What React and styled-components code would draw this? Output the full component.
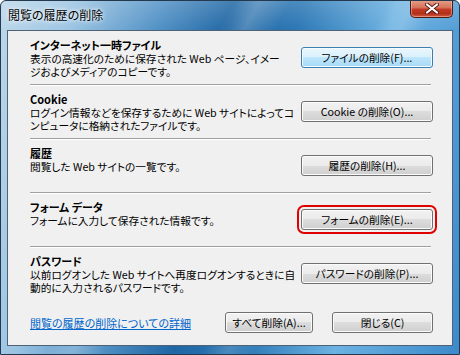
import React from "react";
import styled, { createGlobalStyle } from "styled-components";

const GlobalStyle = createGlobalStyle`
  html, body {
    margin: 0;
    padding: 0;
    background: #ffffff;
  }
  body {
    font-family: "Noto Sans CJK JP", "Liberation Sans", sans-serif;
    font-size: 11px;
    color: #000;
  }
`;

const Window = styled.div`
  width: 460px;
  height: 355px;
  box-sizing: border-box;
  display: flex;
  flex-direction: column;
  border: 1px solid #24384e;
  border-radius: 6px 6px 0 0;
  overflow: hidden;
  background:
    linear-gradient(118deg, transparent 36%, rgba(255, 255, 255, 0.2) 40%, transparent 45%),
    linear-gradient(118deg, transparent 60%, rgba(255, 255, 255, 0.16) 64%, transparent 68%),
    linear-gradient(180deg, rgba(255, 255, 255, 0.16) 0%, rgba(255, 255, 255, 0) 30px),
    linear-gradient(100deg, #bcd7ea 0%, #9cc5e3 14%, #5594c7 30%, #1f66a4 45%, #2b77b5 58%, #6cb2e2 76%, #3c8acb 100%);
`;

const TitleBar = styled.div`
  height: 29px;
  display: flex;
  justify-content: space-between;
  align-items: flex-start;
  padding-left: 7px;
`;

const Title = styled.div`
  margin-top: 6px;
  font-size: 12px;
  line-height: 16px;
  color: #000;
  text-shadow: 0 0 6px rgba(255, 255, 255, 0.9), 0 0 3px rgba(255, 255, 255, 0.9);
  font-feature-settings: "palt";
`;

const CloseButton = styled.div`
  width: 43px;
  height: 18px;
  margin-right: 6px;
  margin-top: -1px;
  box-sizing: border-box;
  display: flex;
  align-items: center;
  justify-content: center;
  border: 1px solid #4a1c14;
  border-top: none;
  border-radius: 0 0 5px 5px;
  background: linear-gradient(180deg, #e6a18b 0%, #d6735a 45%, #c23a25 55%, #b52f1b 80%, #d45c44 100%);
  box-shadow: inset 0 0 0 1px rgba(255, 210, 190, 0.45);
`;

const Client = styled.div`
  flex: 1;
  margin: 0 6px 8px 6px;
  border: 1px solid #4f6276;
  background: #f0f0f0;
  padding: 0 19px 0 22px;
  display: flex;
  flex-direction: column;
`;

const Section = styled.div`
  height: 53px;
  display: grid;
  grid-template-columns: 1fr auto;
  align-items: center;
  border-bottom: ${(p) => (p.$last ? "none" : "1px solid #a0a0a0")};
  box-shadow: ${(p) => (p.$last ? "none" : "0 1px 0 #ffffff")};
  margin-right: ${(p) => (p.$last ? "0" : "2px")};
`;

const TextBlock = styled.div`
  align-self: start;
  padding-top: 7px;
  white-space: nowrap;
  font-feature-settings: "palt";
`;

const Heading = styled.div`
  font-weight: 700;
  font-size: 11px;
  line-height: 14px;
`;

const Desc = styled.div`
  font-size: 10.7px;
  line-height: 13px;
  white-space: pre;
`;

const Button = styled.button`
  width: ${(p) => p.$w || 132}px;
  height: 21px;
  padding: 0;
  margin-right: ${(p) => (p.$shift ? "-2px" : "0")};
  font-family: "Noto Sans CJK JP", "Liberation Sans", sans-serif;
  font-size: 10.7px;
  line-height: 19px;
  color: #000;
  font-feature-settings: "palt";
  border-radius: 3px;
  border: 1px solid ${(p) => (p.$active ? "#3c7fb1" : "#707070")};
  box-shadow: inset 0 0 0 1px ${(p) => (p.$active ? "#f4fbff" : "#fbfbfb")};
  background: ${(p) =>
    p.$active
      ? "linear-gradient(180deg, #eaf6fd 0%, #d9f0fc 50%, #bee6fd 50%, #a7d9f5 100%)"
      : "linear-gradient(180deg, #f2f2f2 0%, #ebebeb 50%, #dddddd 50%, #cfcfcf 100%)"};
  outline: ${(p) => (p.$marked ? "2px solid #e00000" : "none")};
  outline-offset: 2px;
`;

const Footer = styled.div`
  margin-top: 12px;
  display: flex;
  align-items: center;
`;

const Link = styled.a`
  color: #0066cc;
  text-decoration: underline;
  font-size: 11px;
  font-feature-settings: "palt";
  cursor: pointer;
`;

const FooterButtons = styled.div`
  margin-left: auto;
  display: flex;
  gap: 19px;
`;

const CloseGlyph = () => (
  <svg width="14" height="11" viewBox="0 0 14 11">
    <path d="M2 1.5 L12 9.5 M12 1.5 L2 9.5" stroke="#5a1a10" strokeWidth="4" strokeLinecap="round" />
    <path d="M2 1.5 L12 9.5 M12 1.5 L2 9.5" stroke="#ffffff" strokeWidth="2.2" strokeLinecap="round" />
  </svg>
);

const sections = [
  {
    title: "インターネット一時ファイル",
    text: "表示の高速化のために保存された Web ページ、イメー\nジおよびメディアのコピーです。",
    button: "ファイルの削除(F)...",
    active: true
  },
  {
    title: "Cookie",
    text: "ログイン情報などを保存するために Web サイトによってコ\nンピュータに格納されたファイルです。",
    button: "Cookie の削除(O)..."
  },
  {
    title: "履歴",
    text: "閲覧した Web サイトの一覧です。",
    button: "履歴の削除(H)..."
  },
  {
    title: "フォーム データ",
    text: "フォームに入力して保存された情報です。",
    button: "フォームの削除(E)...",
    marked: true
  },
  {
    title: "パスワード",
    text: "以前ログオンした Web サイトへ再度ログオンするときに自\n動的に入力されるパスワードです。",
    button: "パスワードの削除(P)..."
  }
];

export default function App() {
  return (
    <>
      <GlobalStyle />
      <Window>
        <TitleBar>
          <Title>閲覧の履歴の削除</Title>
          <CloseButton>
            <CloseGlyph />
          </CloseButton>
        </TitleBar>
        <Client>
          {sections.map((s, i) => (
            <Section key={s.title} $last={i === sections.length - 1}>
              <TextBlock>
                <Heading>{s.title}</Heading>
                <Desc>{s.text}</Desc>
              </TextBlock>
              <Button $active={s.active} $marked={s.marked} $shift={i !== sections.length - 1}>
                {s.button}
              </Button>
            </Section>
          ))}
          <Footer>
            <Link>閲覧の履歴の削除についての詳細</Link>
            <FooterButtons>
              <Button $w={88}>すべて削除(A)...</Button>
              <Button $w={101}>閉じる(C)</Button>
            </FooterButtons>
          </Footer>
        </Client>
      </Window>
    </>
  );
}
